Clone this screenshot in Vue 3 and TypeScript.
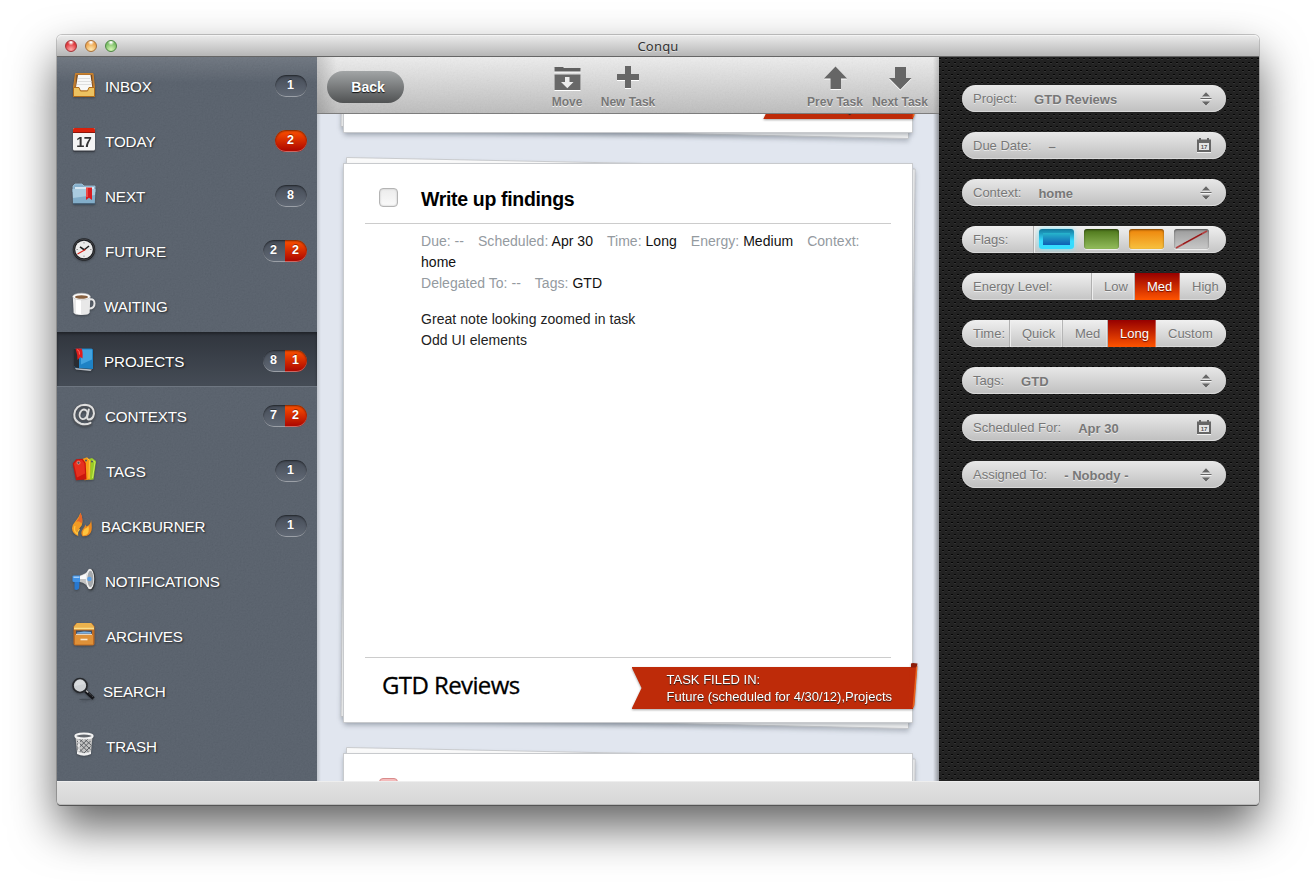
<script setup lang="ts">
interface NavItem {
  id: string
  label: string
  nudge: number
  count?: number
  alert?: number
}

const nav: NavItem[] = [
  { id: 'inbox', label: 'INBOX', nudge: 33, count: 1 },
  { id: 'today', label: 'TODAY', nudge: 33, alert: 2 },
  { id: 'next', label: 'NEXT', nudge: 33, count: 8 },
  { id: 'future', label: 'FUTURE', nudge: 33, count: 2, alert: 2 },
  { id: 'waiting', label: 'WAITING', nudge: 32 },
  { id: 'projects', label: 'PROJECTS', nudge: 32, count: 8, alert: 1 },
  { id: 'contexts', label: 'CONTEXTS', nudge: 33, count: 7, alert: 2 },
  { id: 'tags', label: 'TAGS', nudge: 34, count: 1 },
  { id: 'backburner', label: 'BACKBURNER', nudge: 29, count: 1 },
  { id: 'notifications', label: 'NOTIFICATIONS', nudge: 33 },
  { id: 'archives', label: 'ARCHIVES', nudge: 34 },
  { id: 'search', label: 'SEARCH', nudge: 31 },
  { id: 'trash', label: 'TRASH', nudge: 34 },
]

interface Field {
  label: string
  kind: 'select' | 'calendar' | 'flags' | 'choice'
  value?: string
  labelWidth?: number
  options?: { text: string; width: number; active?: boolean }[]
}

const fields: Field[] = [
  { label: 'Project:', kind: 'select', value: 'GTD Reviews' },
  { label: 'Due Date:', kind: 'calendar', value: '–' },
  { label: 'Context:', kind: 'select', value: 'home' },
  { label: 'Flags:', kind: 'flags', labelWidth: 72 },
  {
    label: 'Energy Level:', kind: 'choice', labelWidth: 130,
    options: [{ text: 'Low', width: 43 }, { text: 'Med', width: 45, active: true }, { text: 'High', width: 46 }],
  },
  {
    label: 'Time:', kind: 'choice', labelWidth: 48,
    options: [{ text: 'Quick', width: 53 }, { text: 'Med', width: 45 }, { text: 'Long', width: 48, active: true }, { text: 'Custom', width: 70 }],
  },
  { label: 'Tags:', kind: 'select', value: 'GTD' },
  { label: 'Scheduled For:', kind: 'calendar', value: 'Apr 30' },
  { label: 'Assigned To:', kind: 'select', value: '- Nobody -' },
]
const flags = ['blue', 'green', 'orange', 'none']

interface Card { id: number; title: string; filed: string; project: string; red?: boolean; full?: boolean }
const cards: Card[] = [
  { id: 1, title: '', filed: 'Next,Projects', project: '' },
  { id: 2, title: 'Write up findings', filed: 'Future (scheduled for 4/30/12),Projects', project: 'GTD Reviews', full: true },
  { id: 3, title: '', filed: '', project: '', red: true },
]
</script>

<template>
  <div class="desktop">
    <div class="window">
      <header class="titlebar">
        <span class="light red"></span><span class="light amber"></span><span class="light green"></span>
        <span class="title">Conqu</span>
      </header>

      <div class="content">
        <nav class="sidebar">
          <svg class="grain" aria-hidden="true">
            <filter id="grain"><feTurbulence type="fractalNoise" baseFrequency="0.6" numOctaves="2" /><feColorMatrix type="matrix" values=".33 .33 .33 0 0 .33 .33 .33 0 0 .33 .33 .33 0 0 0 0 0 0 1" /></filter>
            <rect width="100%" height="100%" filter="url(#grain)" />
          </svg>
          <div v-for="n in nav" :key="n.id" class="item" :class="{ active: n.id === 'projects' }">
            <svg class="icon" :style="{ marginRight: n.nudge - 26 + 'px' }" width="26" height="26" viewBox="0 0 26 26">
              <template v-if="n.id === 'inbox'">
                <path d="M3.500 1.500h17.500l1.500 14v9h-21v-9z" fill="#b8752c" stroke="#c8822f" />
                <path d="M4.500 3h15.500l.8 13H3.700z" fill="#754a20" />
                <path d="M6 3h12.500l1.800 12.500-2.500 3H7L4 15z" fill="#f8f8f8" />
                <path d="M6 6.500h12M5.500 9.500h14M5 12.500h15" stroke="#dedede" />
                <path d="M1.500 15.500H7l1.500 3.500h7l1.500-3.500h5.500v9h-21z" fill="#edc260" stroke="#b06d1d" />
              </template>
              <template v-else-if="n.id === 'today'">
                <rect x="1" y="2" width="22" height="23" rx="1.500" fill="#2d3036" opacity=".55" />
                <rect x="1" y="1" width="22" height="22.500" rx="1.500" fill="#f4f4f4" />
                <path d="M1 6V2.500Q1 1 2.500 1h19Q23 1 23 2.500V6z" fill="#d9210b" />
                <path d="M1 5.500h22" stroke="#8e1509" />
                <text x="11.700" y="19.500" text-anchor="middle" class="day">17</text>
              </template>
              <template v-else-if="n.id === 'next'">
                <path d="M1 4l2-2h7l2 2h11v6H1z" fill="#86b0cc" stroke="#a6c9de" stroke-width=".8" />
                <path d="M3 5h19v4H3z" fill="#d7e8f3" />
                <path d="M.5 7h23l-.7 14.500H1z" fill="#82adc9" />
                <path d="M.7 7h22.600l-.3 6-22 3z" fill="#aacbdf" />
                <path d="M1 22h22.500" stroke="#37536a" />
                <path d="M14 5.500h6V18l-3-2.300-3 2.300z" fill="#d91c20" />
                <path d="M15 6v9" stroke="#ff7b6f" />
              </template>
              <template v-else-if="n.id === 'future'">
                <circle cx="12" cy="12.500" r="11.200" fill="#1c1d20" />
                <circle cx="12" cy="12.500" r="10.300" fill="none" stroke="#4c4e52" stroke-width=".7" />
                <circle cx="12" cy="12.500" r="8.800" fill="#ececec" />
                <path d="M12 5v1.500M12 18.500V20M4.500 12.500H6M18 12.500h1.500" stroke="#999" />
                <path d="M12.500 13L8 9.800M12 13l5-4" stroke="#222" stroke-width="1.600" />
                <path d="M13.500 12.500L5.500 17" stroke="#d8231a" stroke-width="1.100" />
              </template>
              <template v-else-if="n.id === 'waiting'">
                <path d="M17.500 7.500q5-1 5 4t-5.500 5" fill="none" stroke="#e7e7e7" stroke-width="2" />
                <path d="M.8 4.500l.8 16q.5 2.500 8 2.500t8-2.500l.8-16z" fill="#e8e8e8" />
                <path d="M4 5v16.500q2 1 5 1V5z" fill="#fff" />
                <ellipse cx="9.500" cy="4.500" rx="8.800" ry="3.300" fill="#fafafa" stroke="#bbb" stroke-width=".6" />
                <ellipse cx="9.500" cy="5" rx="6.500" ry="1.700" fill="#87603f" />
              </template>
              <template v-else-if="n.id === 'projects'">
                <path d="M3 21l17 1.500-1.500 1.500L4 22.500z" fill="#b7bdc4" />
                <path d="M2 1.500h17.500l1.500 1V22L4 21 2 19.500z" fill="#1e82c5" />
                <path d="M9 2.500h11v10L9 17.500z" fill="#43a3df" />
                <path d="M2 1.500h5V21l-3-.2L2 19.300z" fill="#292c31" />
                <path d="M3.500 1.500h6q1.500 2 1 10l-2.200-1.500L5.500 13l-.3-5z" fill="#df1d1c" />
                <path d="M5 2.500q3 1 2.500 5" stroke="#ff6b62" fill="none" />
              </template>
              <template v-else-if="n.id === 'contexts'">
                <g fill="none" stroke-linecap="round">
                  <path d="M18.500 21.500Q14 24 9 22.500 1.800 19.800 2.300 13 3.500 3.300 13 3.300q9 .5 9 8.700-1 6.500-5.500 6.300-2-.5-1-4l1.300-6.300" stroke="#505358" stroke-width="3.200" />
                  <ellipse cx="11.500" cy="12.800" rx="3.800" ry="4.800" transform="rotate(18 11.500 12.800)" stroke="#505358" stroke-width="3" />
                  <path d="M18.500 20.800Q14 23.200 9 21.800 1.800 19 2.300 12.300 3.500 3 13 2.800q9 .5 9 8.700-1 6.200-5.500 6-2-.5-1-4l1.300-6" stroke="#dedede" stroke-width="2" />
                  <ellipse cx="11.500" cy="12.300" rx="3.800" ry="4.800" transform="rotate(18 11.500 12.300)" stroke="#dedede" stroke-width="1.900" />
                </g>
              </template>
              <template v-else-if="n.id === 'tags'">
                <path d="M15 2.500l5-1.500 4 3-2.500 18.500-4 .5z" fill="#9acb28" />
                <path d="M20 3l3 2-2.500 16" fill="none" stroke="#c9ee55" />
                <path d="M9 2.500L15 .2l3.500 3L18 22.500l-5.500.8z" fill="#f59d17" />
                <path d="M15.500 1.500l2 2-.5 18" fill="none" stroke="#ffc443" />
                <path d="M.7 6.500l3.500-4.200 6.500-.5 3 4.200.8 16.500-10.500.8z" fill="#c9150d" />
                <path d="M2 7L5 3.300l5-.3L12.500 6.500l.5 10-8 4z" fill="#e6301f" />
                <circle cx="6.500" cy="5.800" r="1.500" fill="#4b5460" stroke="#ffb0a0" stroke-width=".6" />
                <circle cx="14" cy="3.500" r="1" fill="#4b5460" /><circle cx="20" cy="4.500" r="1" fill="#4b5460" />
              </template>
              <template v-else-if="n.id === 'backburner'">
                <path d="M8.500.8Q7.200 5 3.200 9.500q-5.500 6-1.500 11.500 2 2.500 5 3.200-2.500-2.500-1-5.700 2-2.500 4-5 2-5-1.200-12.700z" fill="#f29b24" />
                <path d="M8.500.8q-.8 5-4.300 9Q7 8 9.500 11.500 11.500 7 8.500.8z" fill="#e5672b" />
                <path d="M19 7.500q.2 5-4.700 7l-.8-2q-1 3-2.800 5Q8 21 10.500 24.200q7.500.5 9-5.700.8-4-.5-11z" fill="#eb8a20" />
                <path d="M16.500 14q-2.500 3-3.500 2.500-3 3-2 7 5-.5 5.500-3.500.7-3 0-6z" fill="#ffc43f" />
                <path d="M3 14q-2 5 2.500 8 0-3 2-5" fill="none" stroke="#ffc43f" stroke-width="1.300" />
              </template>
              <template v-else-if="n.id === 'notifications'">
                <path d="M2.500 14h5l-.5 7.500q-1.500 2.300-4.500 1z" fill="#2778d0" />
                <path d="M.5 9.500q0-1 1.500-1h6V15H2q-1.500 0-1.500-1z" fill="#3f91e5" />
                <path d="M1.500 9.500h6v1.500h-6z" fill="#9fcbf7" />
                <path d="M8 8.500q6-1.500 9-6v19q-3-5.500-9-6.500z" fill="#c2c2c2" />
                <path d="M8 9.300q5-1.500 9-5V12H8z" fill="#fafafa" />
                <ellipse cx="18.800" cy="12.500" rx="4.600" ry="10.800" fill="#36393d" />
                <ellipse cx="18" cy="12" rx="4.200" ry="10.300" fill="#ededed" />
                <ellipse cx="18.400" cy="12" rx="3" ry="8.200" fill="#a5a8ab" />
                <circle cx="17.400" cy="12" r="2.300" fill="#5a9fe5" />
              </template>
              <template v-else-if="n.id === 'archives'">
                <path d="M4.500 1h15l3 3.500v17q0 2-2 2h-17q-2 0-2-2v-17z" fill="#bf6c23" />
                <path d="M5 1h14l3 3.500v3H2v-3z" fill="#ebb24d" />
                <path d="M2 6.500h20" stroke="#fadd8b" stroke-width="1.500" />
                <path d="M3 13h18v9.500H3z" fill="#df9138" />
                <path d="M4 8.500h16V12H4z" fill="#3c4e68" />
                <path d="M5 10.500l7-1 7 .5v1.500H5z" fill="#79b0e4" />
                <path d="M4 12.300h16" stroke="#f4efe3" />
                <path d="M8.500 17.500h7" stroke="#f9e8cd" stroke-width="1.600" />
              </template>
              <template v-else-if="n.id === 'search'">
                <ellipse cx="13" cy="22.500" rx="6" ry=".8" fill="#343941" opacity=".5" />
                <path d="M13.500 14l8 7.500" stroke="#15161a" stroke-width="3.400" />
                <path d="M14 13.500l2.300 2" stroke="#bbb" stroke-width="1.500" />
                <path d="M17 16.300l4.500 4" stroke="#777" stroke-width=".7" stroke-dasharray="1 1" />
                <circle cx="8" cy="8.500" r="7" fill="#cdd0d3" stroke="#26282c" stroke-width="1.700" />
                <path d="M3 9a5 5 0 0 1 10-2z" fill="#e6e8e9" opacity=".5" />
              </template>
              <template v-else>
                <path d="M3.500 4.500l1.500 16q7 4 14 0l1.500-16z" fill="#c2c2c2" />
                <path d="M5 9l12.500 12M7 6.500l11.500 11M12 6.500l7.500 7M5 14.500l7 7M18.500 9L7 20.500M16 7L5 17.500M18.500 14.500L12 21M11 7l-6 5.500" stroke="#55585c" stroke-width=".9" />
                <path d="M7 8.500v11" stroke="#fff" stroke-width="1.200" />
                <path d="M5 19.500q7 3.500 14 0v2.500q-7 3.500-14 0z" fill="#f0f0f0" />
                <ellipse cx="12" cy="4" rx="8.700" ry="2.500" fill="#62666c" stroke="#f3f3f3" stroke-width="2" />
              </template>
            </svg>
            <span class="label">{{ n.label }}</span>
            <span v-if="n.count || n.alert" class="badge">
              <b v-if="n.count" :class="{ half: n.alert }">{{ n.count }}</b>
              <b v-if="n.alert" class="alert" :class="{ half: n.count }">{{ n.alert }}</b>
            </span>
          </div>
        </nav>

        <main class="main">
          <div class="toolbar">
            <svg class="grain" aria-hidden="true"><rect width="100%" height="100%" filter="url(#grain)" /></svg>
            <button class="back">Back</button>
            <div class="tool move">
              <svg width="28" height="26" viewBox="0 0 28 26">
                <path d="M1.500 1H10l1 1h16.500v3.500h-26z" fill="#606060" />
                <path d="M1.500 8.500h26V24h-26z" fill="#686868" />
                <path d="M12 11h4.500v5h4L14.300 22.300 8 16h4z" fill="#ededed" />
              </svg>
              <span>Move</span>
            </div>
            <div class="tool new">
              <svg width="28" height="26" viewBox="0 0 28 26"><path d="M11 0h6v8h8v6h-8v8h-6v-8H3V8h8z" fill="#666" /></svg>
              <span>New Task</span>
            </div>
            <div class="tool prev">
              <svg width="28" height="26" viewBox="0 0 28 26"><path d="M14.500 .5l11.500 12H20V23H9.500V12.500H3z" fill="#666" /></svg>
              <span>Prev Task</span>
            </div>
            <div class="tool following">
              <svg width="28" height="26" viewBox="0 0 28 26"><path d="M9 1h11v11h5.500L14.300 23.500 3 12h6z" fill="#666" /></svg>
              <span>Next Task</span>
            </div>
          </div>

          <div class="deck">
            <article v-for="c in cards" :key="c.id" class="card">
              <svg class="under" width="590" height="590" viewBox="-8 -8 590 590">
                <path d="M3.500 -5.500L572.200 6 565.500 565.500 -2 553.500z" fill="#fafafa" stroke="#c9cbce" />
              </svg>
              <div class="paper">
                <div class="head">
                  <span class="check" :class="{ red: c.red }"></span>
                  <h2>{{ c.title }}</h2>
                </div>
                <div class="body">
                  <template v-if="c.full">
                    <p class="meta">
                      <span>Due: --</span><span>Scheduled: <i>Apr 30</i></span><span>Time: <i>Long</i></span><span>Energy: <i>Medium</i></span><span>Context: <i>home</i></span><br />
                      <span>Delegated To: --</span><span>Tags: <i>GTD</i></span>
                    </p>
                    <p class="note">Great note looking zoomed in task<br />Odd UI elements</p>
                  </template>
                </div>
                <div class="foot">
                  <span class="project">{{ c.project }}</span>
                  <div v-if="c.filed" class="ribbon">
                    <div class="cloth">TASK FILED IN:<br />{{ c.filed }}</div>
                    <svg class="fold" width="12" height="48" viewBox="0 0 12 48">
                      <path d="M5 6V1.500Q6 .5 11.500 1.500L10.500 6z" fill="#8c1c08" />
                      <path d="M4 5.500H11L7.800 44.500Q7.500 46 3 47z" fill="#c02c0a" />
                      <path d="M11.500 3.500L10 5.500 6.500 46Q8 45.500 8.500 43z" fill="#e8621d" />
                    </svg>
                  </div>
                </div>
              </div>
            </article>
          </div>
        </main>

        <aside class="details">
          <svg class="mesh" aria-hidden="true">
            <pattern id="mesh" width="6" height="8" patternUnits="userSpaceOnUse">
              <path d="M0 1h2v1H0zM3 5h2v1H3z" fill="#050505" />
              <path d="M0 2h2v1H0zM3 6h2v1H3z" fill="#333" />
            </pattern>
            <rect width="100%" height="100%" fill="url(#mesh)" />
          </svg>
          <div v-for="f in fields" :key="f.label" class="field" :class="f.kind">
            <span class="name" :style="{ width: f.labelWidth ? f.labelWidth + 'px' : 'auto' }">{{ f.label }}</span>
            <template v-if="f.kind === 'flags'">
              <span v-for="c in flags" :key="c" class="flag" :class="c">
                <svg v-if="c === 'none'" width="35" height="20" viewBox="0 0 35 20"><path d="M2 19L33 2" stroke="#b04040" stroke-width="1.800" /><path d="M9 15L28 4.700" stroke="#8e1414" stroke-width="1" /></svg>
              </span>
            </template>
            <template v-else-if="f.kind === 'choice'">
              <span v-for="o in f.options" :key="o.text" class="option" :class="{ on: o.active }" :style="{ width: o.width + 'px' }">{{ o.text }}</span>
            </template>
            <template v-else>
              <b class="value">{{ f.value }}</b>
              <svg v-if="f.kind === 'select'" class="mark" width="12" height="14" viewBox="0 0 12 14">
                <path d="M2.500 5.500h7L6 1.500zM2.500 10.500h7L6 14.500z" fill="#fff" opacity=".7" />
                <path d="M2 4.500h8L6 .3zM2 9.500h8L6 13.700z" fill="#666" />
                <path d="M.5 6.500h11" stroke="#666" /><path d="M.5 7.500h11" stroke="#f4f4f4" />
              </svg>
              <svg v-else class="mark cal" width="14" height="15" viewBox="0 0 14 15">
                <path d="M0 3h14v12H0z" fill="#f4f4f4" />
                <path d="M0 1.500h2V0h2v1.500h6V0h2v1.500h2V14H0z" fill="#666" />
                <path d="M2 5h10v7H2z" fill="#e4e4e4" />
                <text x="7" y="11" text-anchor="middle" class="tiny">17</text>
              </svg>
            </template>
          </div>
        </aside>
      </div>

      <footer class="statusbar"></footer>
    </div>
  </div>
</template>

<style>
body { margin: 0; background: #fff; }
</style>

<style scoped>
* { box-sizing: border-box; }
.desktop { width: 1316px; height: 884px; padding: 35px 57px 0; overflow: hidden; font-family: "Liberation Sans", Arial, sans-serif; }
.window { width: 1202px; height: 770px; border-radius: 5px; display: flex; flex-direction: column; box-shadow: 0 0 0 1px rgba(0, 0, 0, .2), 0 22px 46px rgba(0, 0, 0, .62); }
.titlebar { height: 22px; flex: none; display: flex; align-items: center; gap: 8px; padding-left: 8px; position: relative; border-radius: 5px 5px 0 0; background: linear-gradient(#ececec, #b6b6b6); border-bottom: 1px solid #656565; box-shadow: inset 0 1px #f4f4f4; }
.light { width: 12px; height: 12px; border-radius: 50%; border: 1px solid; }
.light.red { background: radial-gradient(circle at 50% 12%, #fff 5%, transparent 32%), radial-gradient(circle at 50% 85%, #ffaaa9, #e0393e 65%); border-color: #a33437; }
.light.amber { background: radial-gradient(circle at 50% 12%, #fff 5%, transparent 32%), radial-gradient(circle at 50% 85%, #ffe9b0, #eda650 65%); border-color: #a8713a; }
.light.green { background: radial-gradient(circle at 50% 12%, #fff 5%, transparent 32%), radial-gradient(circle at 50% 85%, #d5f7b3, #7dbf68 65%); border-color: #4d8742; }
.title { position: absolute; left: 0; right: 0; text-align: center; font: 13px "Noto Sans", "Open Sans", sans-serif; letter-spacing: .2px; color: #333; text-shadow: 0 1px rgba(255, 255, 255, .5); top: 2px; }
.content { flex: 1; min-height: 0; display: flex; }
.grain { position: absolute; inset: 0; width: 100%; height: 100%; opacity: .09; pointer-events: none; }

.sidebar { width: 260px; position: relative; overflow: hidden; background: linear-gradient(rgba(255, 255, 255, .14), transparent 26px), #525b67; }
.item { height: 55px; position: relative; display: flex; align-items: center; padding: 3px 10px 0 15px; }
.item.active { background: linear-gradient(#30353d, #454c56); border-bottom: 1px solid #6e7681; box-shadow: inset 0 2px 3px rgba(0, 0, 0, .35); }
.icon { flex: none; position: relative; top: -1px; overflow: visible; filter: drop-shadow(0 1px 1px rgba(0, 0, 0, .3)); }
.day { font: bold 14.500px "Liberation Sans", sans-serif; fill: #333; letter-spacing: -.5px; }
.label { flex: 1; font-size: 15.200px; color: #fff; text-shadow: 1px 1px 2px rgba(0, 0, 0, .65); padding-top: 1px; white-space: nowrap; letter-spacing: -.1px; }
.badge { height: 22px; width: 32px; display: flex; border-radius: 11px; overflow: hidden; color: #fff; font-size: 12.500px; text-align: center; background: linear-gradient(#454c57, #626a76); position: relative; }
.badge::after { content: ""; position: absolute; inset: 0; border-radius: 11px; box-shadow: inset 0 1px 2px rgba(0, 0, 0, .55), inset 0 -1px rgba(255, 255, 255, .4); }
.badge b { flex: 1; line-height: 20px; text-shadow: 0 -1px rgba(0, 0, 0, .4); padding-right: 1px; }
.badge .alert { background: linear-gradient(#ff5200, #b00a00 20px); }
.badge:has(.half) { width: 44px; }

.main { width: 622px; background: #e1e6ef; display: flex; flex-direction: column; position: relative; overflow: hidden; }
.main::after { content: ""; position: absolute; inset: 0; pointer-events: none; background: linear-gradient(90deg, rgba(0, 0, 0, .14), transparent 4px, transparent 616px, rgba(0, 0, 0, .36)); }
.toolbar { height: 57px; flex: none; position: relative; z-index: 2; display: flex; align-items: flex-start; background: linear-gradient(90deg, rgba(0, 0, 0, .16), transparent 20px, transparent 616px, rgba(0, 0, 0, .18)), linear-gradient(#f0f0f0, #bdbdbd); border-bottom: 1px solid #7d7d7d; }
.back { margin: 14px 0 0 10px; width: 77px; height: 32px; border: 0; border-radius: 16px; background: linear-gradient(#a2a5a6, #505253); color: #fff; font: bold 14px "Liberation Sans", sans-serif; text-shadow: 0 1px 1px #111; padding: 0 0 0 5px; position: relative; }
.tool { display: flex; flex-direction: column; align-items: center; width: 64px; position: relative; padding-top: 9px; font-weight: bold; font-size: 12px; line-height: 14px; color: #777; text-shadow: 0 1px #f2f2f2; white-space: nowrap; gap: 3px; }
.tool svg { filter: drop-shadow(0 1px 0 #fff); }
.tool.move { margin-left: 131px; }
.tool.new { margin-left: -3px; }
.tool.prev { margin-left: 143px; }
.tool.following { margin-left: 1px; }

.deck { flex: 1; min-height: 0; overflow: hidden; padding-left: 26px; }
.card { position: relative; width: 570px; height: 560px; margin-bottom: 30px; }
.card:first-child { margin-top: -541px; }
.under { position: absolute; left: -8px; top: -8px; filter: drop-shadow(0 3px 2px rgba(60, 70, 85, .25)); }
.paper { position: relative; height: 100%; background: #fff; border: 1px solid #c8cacd; box-shadow: 0 3px 5px -1px rgba(60, 70, 85, .4); padding: 0 21px; display: flex; flex-direction: column; }
.head { height: 60px; flex: none; border-bottom: 1px solid #ccc; display: flex; align-items: center; padding: 11px 0 0 14px; gap: 23px; }
.check { width: 19px; height: 19px; border: 1px solid #b4b4b4; border-radius: 4px; background: linear-gradient(#ececec, #fafafa); box-shadow: inset 0 0 2px #bbb; margin-top: -4px; }
.check.red { border-color: #d98b8b; background: #f4bcbc; box-shadow: none; }
.head h2 { margin: 0; font-size: 19.500px; letter-spacing: -.33px; color: #000; }
.body { flex: 1; padding: 7px 0 0 56px; font-size: 14px; line-height: 21px; letter-spacing: .03px; }
.meta, .note { margin: 0; color: #222; }
.meta { color: #949a9f; width: 460px; }
.meta span { margin-right: 14px; }
.meta i { font-style: normal; color: #111; }
.note { margin-top: 15px; letter-spacing: .06px; }
.foot { height: 65px; flex: none; border-top: 1px solid #ccc; display: flex; justify-content: space-between; position: relative; padding-left: 17px; }
.project { font: 24px/54px "Open Sans", "Noto Sans", sans-serif; letter-spacing: -.6px; color: #000; -webkit-text-stroke: .3px #000; }
.ribbon { position: relative; margin: 9px -22px 0 0; height: 42px; filter: drop-shadow(0 1px 1px rgba(0, 0, 0, .35)); }
.cloth { height: 42px; padding: 4px 21px 0 35px; font-size: 13px; line-height: 17px; color: #fff; background: #be2b09; text-shadow: 0 1px 1px #222; clip-path: polygon(0 0, 100% 0, 100% 100%, 0 100%, 10px 50%); white-space: nowrap; }
.fold { position: absolute; right: -5px; top: -5px; }

.details { width: 320px; padding: 28px 33px 0 23px; display: flex; flex-direction: column; gap: 20px; background: #222; position: relative; overflow: hidden; }
.mesh { position: absolute; inset: 0; width: 100%; height: 100%; }
.field { position: relative; height: 27px; width: 264px; flex: none; border-radius: 13.500px; background: linear-gradient(#e8e8e8, #bfbfbf); box-shadow: inset 0 -1px #d9d9d9; display: flex; align-items: center; padding-left: 11px; font-size: 13px; line-height: 27px; color: #777; text-shadow: 0 1px rgba(255, 255, 255, .6); overflow: hidden; white-space: nowrap; }
.field.flags, .field.choice { background: linear-gradient(#f0f0f0, #c4c4c4); padding-left: 0; }
.name { flex: none; }
.flags .name, .choice .name { padding-left: 11px; border-right: 1px solid #b0b0b0; box-shadow: 1px 0 #eee; }
.value { padding-top: 1px; margin-left: 17px; }
.mark { margin: 0 14px 0 auto; overflow: visible; }
.mark.cal { margin: -1px 15px 0 auto; }
.tiny { font: bold 6px "Liberation Sans", sans-serif; fill: #555; }
.option { flex: none; height: 27px; padding-left: 12px; border-right: 1px solid #b5b5b5; box-shadow: inset -1px 0 rgba(255, 255, 255, .3); }
.option:last-child { border: 0; }
.option.on { background: linear-gradient(#960000, #ff5400); color: #fff; text-shadow: 0 1px 1px #6a0d00; border: 0; }
.flag { width: 35px; height: 20px; margin-left: 10px; border-radius: 3px; flex: none; box-shadow: inset 0 1px 2px rgba(0, 0, 0, .5), 0 1px #eee; position: relative; top: -1px; }
.name + .flag { margin-left: 5px; }
.flag svg { display: block; }
.flag.blue { padding: 4px; background: linear-gradient(#12799d, #35dcff 60%); box-shadow: 0 0 5px #7de9ff; }
.flag.blue::before { content: ""; display: block; height: 12px; background: linear-gradient(#27b5cc, #0f5fb5); }
.flag.green { background: linear-gradient(#4b7418, #93bd5c); }
.flag.orange { background: linear-gradient(#ee8309, #f7c13f); }
.flag.none { background: linear-gradient(#9b9b9b, #c8c8c8); }

.statusbar { height: 24px; flex: none; border-radius: 0 0 4px 4px; background: linear-gradient(#e2e2e2, #d7d7d7); border-bottom: 1px solid #b9b9b9; box-shadow: inset 0 1px #eee, 0 1px #555; }
</style>
